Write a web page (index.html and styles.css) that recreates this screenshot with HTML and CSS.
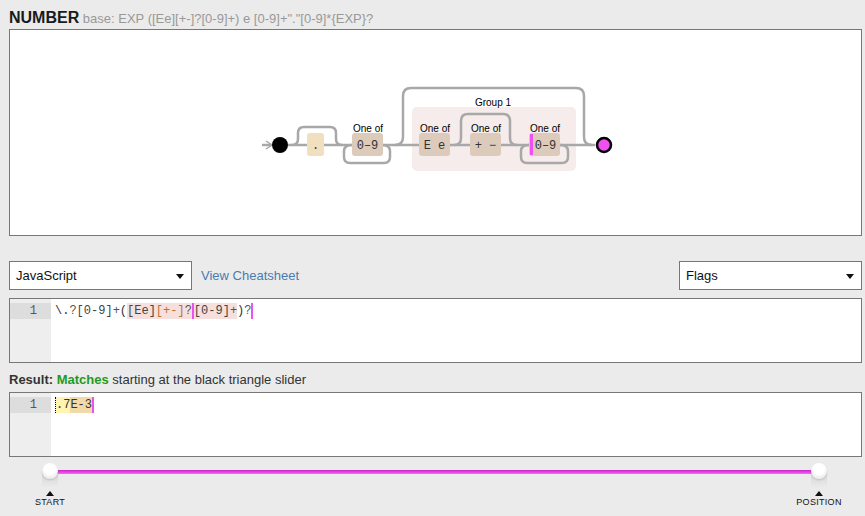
FILE: index.html
```html
<!DOCTYPE html>
<html>
<head>
<meta charset="utf-8">
<link rel="stylesheet" href="styles.css">
</head>
<body>
<div class="page">
  <h1 class="title"><span class="name">NUMBER</span> <span class="base">base: EXP ([Ee][+-]?[0-9]+) e [0-9]+"."[0-9]*{EXP}?</span></h1>
  <div class="diagram">
    <svg class="rail" width="851" height="205" viewBox="10 30 851 205" xmlns="http://www.w3.org/2000/svg">
      <rect x="412" y="107" width="164" height="64" rx="5" fill="#f5eceb"/>
      <g fill="none" stroke="#a8a8a8" stroke-width="2.5">
        <path d="M262 145 H272"/>
        <path d="M288 145 H595"/>
        <path d="M292 145 q6 0 6 -6 v-6 q0 -6 6 -6 h26 q6 0 6 6 v6 q0 6 6 6"/>
        <path d="M352 145 q-8 0 -8 6 v6 q0 6 6 6 h34 q6 0 6 -6 v-6 q0 -6 -8 -6"/>
        <path d="M395 145 q8 0 8 -8 v-41 q0 -8 8 -8 h165 q8 0 8 8 v41 q0 8 8 8"/>
        <path d="M454 145 q7 0 7 -7 v-17 q0 -7 7 -7 h35 q7 0 7 7 v17 q0 7 7 7"/>
        <path d="M529 145 q-8 0 -8 6 v6 q0 6 6 6 h35 q6 0 6 -6 v-6 q0 -6 -8 -6"/>
      </g>
      <path d="M266 141 L272 145 L266 149" fill="none" stroke="#a8a8a8" stroke-width="1.5"/>
      <circle cx="280" cy="145" r="8" fill="#000"/>
      <text x="493" y="106" class="lbl" text-anchor="middle">Group 1</text>
      <rect x="307" y="133" width="17" height="23" rx="3" fill="#f0e0c0"/>
      <text x="315.5" y="149" class="mono" text-anchor="middle">.</text>
      <text x="368" y="132" class="lbl" text-anchor="middle">One of</text>
      <rect x="352" y="133" width="31" height="23" rx="3" fill="#dccbbb"/>
      <text x="367.5" y="149" class="mono" text-anchor="middle">0–9</text>
      <text x="435" y="132" class="lbl" text-anchor="middle">One of</text>
      <rect x="419" y="133" width="31" height="23" rx="3" fill="#dccbbb"/>
      <text x="434.5" y="149" class="mono" text-anchor="middle">E e</text>
      <text x="486" y="132" class="lbl" text-anchor="middle">One of</text>
      <rect x="470" y="133" width="31" height="23" rx="3" fill="#dccbbb"/>
      <text x="485.5" y="149" class="mono" text-anchor="middle">+ −</text>
      <text x="545" y="132" class="lbl" text-anchor="middle">One of</text>
      <rect x="529" y="133" width="31" height="23" rx="3" fill="#dccbbb"/>
      <rect x="530" y="134" width="3" height="21" fill="#f050f0"/>
      <text x="545.5" y="149" class="mono" text-anchor="middle">0–9</text>
      <circle cx="604" cy="145" r="7" fill="#f050f0" stroke="#000" stroke-width="2.5"/>
    </svg>
  </div>
  <div class="toolbar">
    <div class="select flavor"><span>JavaScript</span><span class="caret"></span></div>
    <a class="cheat">View Cheatsheet</a>
    <div class="spacer"></div>
    <div class="select flags"><span>Flags</span><span class="caret"></span></div>
  </div>
  <div class="editor">
    <div class="gutter"><div class="ln">1</div></div>
    <div class="code"><span class="esc">\.</span><span class="q">?</span><span class="cls">[0-9]</span><span class="q">+</span><span class="par">(</span><span class="grp"><span class="cls">[Ee]</span><span class="cls2">[+-]</span><span class="q">?</span><span class="cur"></span><span class="cls">[0-9]</span><span class="q">+</span></span><span class="par">)</span><span class="q">?</span><span class="cur"></span></div>
  </div>
  <div class="result"><b>Result:</b> <b class="ok">Matches</b> starting at the black triangle slider</div>
  <div class="editor second">
    <div class="gutter"><div class="ln">1</div></div>
    <div class="code"><span class="m1">.7</span><span class="m2">E-3</span><span class="cur"></span></div>
  </div>
  <div class="slider">
    <div class="track"></div>
    <div class="knob start"><div class="cap"></div><div class="tri"></div><div class="klabel">START</div></div>
    <div class="knob pos"><div class="cap"></div><div class="tri"></div><div class="klabel">POSITION</div></div>
  </div>
</div>
</body>
</html>
```
FILE: styles.css
```css
html, body {
  margin: 0;
  padding: 0;
  background: #ebebeb;
  font-family: "Liberation Sans", Arial, sans-serif;
  color: #222;
}
.page {
  padding: 6px 3px 0 9px;
  width: 853px;
}
.title {
  margin: 0;
  height: 23px;
  font-size: 13px;
  font-weight: normal;
  line-height: 23px;
  white-space: nowrap;
}
.title .name {
  font-size: 16px;
  font-weight: bold;
  color: #1a1a1a;
}
.title .base {
  color: #999;
  font-size: 13px;
}
.diagram {
  height: 205px;
  border: 1px solid #777;
  background: #fff;
}
.rail { display: block; }
.lbl {
  font-family: "Liberation Sans", Arial, sans-serif;
  font-size: 10px;
  fill: #000;
}
.mono {
  font-family: "Liberation Mono", "Courier New", monospace;
  font-size: 12px;
  fill: #333;
}
.toolbar {
  display: flex;
  align-items: center;
  margin-top: 25px;
  height: 29px;
}
.select {
  box-sizing: border-box;
  height: 29px;
  border: 1px solid #777;
  background: #fff;
  display: flex;
  align-items: center;
  justify-content: space-between;
  padding: 0 7px 0 6px;
  font-size: 13px;
  color: #111;
}
.flavor { width: 183px; }
.flags { width: 183px; }
.caret {
  width: 0; height: 0;
  border-left: 4px solid transparent;
  border-right: 4px solid transparent;
  border-top: 5px solid #111;
  margin-top: 2px;
}
.cheat {
  margin-left: 9px;
  color: #4a7bb0;
  font-size: 13px;
}
.spacer { flex: 1; }
.editor {
  margin-top: 8px;
  height: 63px;
  border: 1px solid #777;
  background: #fff;
  display: flex;
  font-family: "Liberation Mono", "Courier New", monospace;
  font-size: 12px;
}
.editor.second { margin-top: 4px; }
.gutter {
  width: 41px;
  background: #eee;
  padding-top: 4px;
}
.ln {
  background: #ddd;
  height: 16px;
  line-height: 16px;
  text-align: right;
  padding-right: 14px;
  color: #555;
}
.code {
  padding: 4px 0 0 4px;
  height: 16px;
  line-height: 16px;
  display: flex;
  white-space: pre;
  color: #333;
}
.q { color: #555; }
.cls { color: #444; }
.cls2 { color: #c07030; }
.grp { background: #f5e0de; display: flex; }
.cur {
  display: inline-block;
  width: 2px;
  height: 16px;
  background: #f050f0;
}
.result {
  margin-top: 9px;
  height: 16px;
  line-height: 16px;
  font-size: 13px;
  color: #333;
}
.result .ok { color: #1e9a1e; }
.m1 {
  background: #fff4b0;
  border-left: 1px dotted #000;
}
.m2 { background: #f2d9a8; }
.slider {
  position: relative;
  height: 60px;
}
.track {
  position: absolute;
  left: 41px;
  right: 43px;
  top: 13px;
  height: 4px;
  background: linear-gradient(#d020d0, #f070f0);
}
.knob {
  position: absolute;
  top: 6px;
  width: 60px;
  display: flex;
  flex-direction: column;
  align-items: center;
  background: linear-gradient(rgba(0,0,0,0.10), rgba(0,0,0,0) 70%) no-repeat 50% 8px / 16px 24px;
}
.knob.start { left: 11px; }
.knob.pos { left: 780px; }
.cap {
  width: 16px;
  height: 16px;
  border-radius: 50%;
  background: radial-gradient(circle at 50% 35%, #fff 40%, #ddd 100%);
  box-shadow: 0 1px 2px rgba(0,0,0,0.15);
}
.tri {
  margin-top: 12px;
  width: 0; height: 0;
  border-left: 4px solid transparent;
  border-right: 4px solid transparent;
  border-bottom: 5px solid #111;
}
.klabel {
  margin-top: 1px;
  font-size: 9px;
  line-height: 10px;
  color: #111;
  letter-spacing: 0.3px;
}
```
